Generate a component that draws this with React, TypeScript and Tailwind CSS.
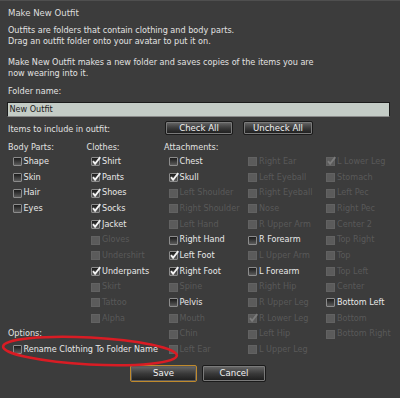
type State = "on" | "off" | "dis" | "dison";
type Item = { label: string; state: State };

const font = {
  fontFamily: "'DejaVu Sans Condensed', 'DejaVu Sans', sans-serif",
};

const bodyParts: Item[] = [
  { label: "Shape", state: "off" },
  { label: "Skin", state: "off" },
  { label: "Hair", state: "off" },
  { label: "Eyes", state: "off" },
];

const clothes: Item[] = [
  { label: "Shirt", state: "on" },
  { label: "Pants", state: "on" },
  { label: "Shoes", state: "on" },
  { label: "Socks", state: "on" },
  { label: "Jacket", state: "on" },
  { label: "Gloves", state: "dis" },
  { label: "Undershirt", state: "dis" },
  { label: "Underpants", state: "on" },
  { label: "Skirt", state: "dis" },
  { label: "Tattoo", state: "dis" },
  { label: "Alpha", state: "dis" },
];

const attach1: Item[] = [
  { label: "Chest", state: "off" },
  { label: "Skull", state: "on" },
  { label: "Left Shoulder", state: "dis" },
  { label: "Right Shoulder", state: "dis" },
  { label: "Left Hand", state: "dis" },
  { label: "Right Hand", state: "off" },
  { label: "Left Foot", state: "on" },
  { label: "Right Foot", state: "on" },
  { label: "Spine", state: "dis" },
  { label: "Pelvis", state: "off" },
  { label: "Mouth", state: "dis" },
  { label: "Chin", state: "dis" },
  { label: "Left Ear", state: "dis" },
];

const attach2: Item[] = [
  { label: "Right Ear", state: "dis" },
  { label: "Left Eyeball", state: "dis" },
  { label: "Right Eyeball", state: "dis" },
  { label: "Nose", state: "dis" },
  { label: "R Upper Arm", state: "dis" },
  { label: "R Forearm", state: "off" },
  { label: "L Upper Arm", state: "dis" },
  { label: "L Forearm", state: "off" },
  { label: "Right Hip", state: "dis" },
  { label: "R Upper Leg", state: "dis" },
  { label: "R Lower Leg", state: "dison" },
  { label: "Left Hip", state: "dis" },
  { label: "L Upper Leg", state: "dis" },
];

const attach3: Item[] = [
  { label: "L Lower Leg", state: "dison" },
  { label: "Stomach", state: "dis" },
  { label: "Left Pec", state: "dis" },
  { label: "Right Pec", state: "dis" },
  { label: "Center 2", state: "dis" },
  { label: "Top Right", state: "dis" },
  { label: "Top", state: "dis" },
  { label: "Top Left", state: "dis" },
  { label: "Center", state: "dis" },
  { label: "Bottom Left", state: "off" },
  { label: "Bottom", state: "dis" },
  { label: "Bottom Right", state: "dis" },
];

const Box = ({ state }: { state: State }) => {
  const disabled = state === "dis" || state === "dison";
  const checked = state === "on" || state === "dison";
  return (
    <span
      className={
        disabled
          ? "relative w-[9px] h-[9px] shrink-0 bg-[#5b5b5b] border border-[#626262]"
          : "relative w-[9px] h-[9px] shrink-0 rounded-[1px] border border-[#8c8c8c] bg-gradient-to-b from-[#1c1c1c] to-[#5c5c5c]"
      }
    >
      {checked && (
        <svg
          viewBox="0 0 9 9"
          className="absolute -left-[1px] -top-[2px] w-[10px] h-[10px]"
        >
          <path
            d="M1.8 4.6 L3.7 7 L8.4 1"
            fill="none"
            stroke={disabled ? "#7c7c7c" : "#f4f4f4"}
            strokeWidth="1.7"
          />
        </svg>
      )}
    </span>
  );
};

const Row = ({ item }: { item: Item }) => {
  const disabled = item.state === "dis" || item.state === "dison";
  return (
    <div className="h-[15.67px] flex items-center gap-[2px] pl-[4.5px] whitespace-nowrap">
      <Box state={item.state} />
      <span
        className={`leading-[15.67px] ${disabled ? "text-[#595959]" : "text-[#e8e8e8]"}`}
      >
        {item.label}
      </span>
    </div>
  );
};

const Button = ({
  label,
  width,
  primary,
}: {
  label: string;
  width: string;
  primary?: boolean;
}) => (
  <div
    className={`${width} flex items-center justify-center rounded-[2px] border text-[9.5px] text-[#f2f2f2] bg-gradient-to-b from-[#6a6a6a] via-[#3a3a3a] to-[#1c1c1c] ${
      primary
        ? "border-[#c08a2c] shadow-[inset_0_0_0_1px_#5a5a5a]"
        : "border-[#1a1a1a] shadow-[inset_0_0_0_1px_#7a7a7a]"
    }`}
  >
    {label}
  </div>
);

export default function App() {
  return (
    <div
      style={font}
      className="relative w-[400px] h-[398px] overflow-hidden bg-[#3c3c3c] border-t border-[#4f4f4f] px-[8px] pt-[6px] text-[9px] text-[#e2e2e2] font-stretch-condensed"
    >
      <div className="text-[9.5px] leading-[11px] text-[#dedede]">
        Make New Outfit
      </div>

      <p className="mt-[7px] leading-[11px]">
        Outfits are folders that contain clothing and body parts.
        <br />
        Drag an outfit folder onto your avatar to put it on.
      </p>
      <p className="mt-[10px] leading-[11px]">
        Make New Outfit makes a new folder and saves copies of the items you are
        <br />
        now wearing into it.
      </p>

      <div className="mt-[7px] leading-[11px]">Folder name:</div>
      <div className="mt-[5px] -ml-[1px] w-[383px] h-[15px] border border-[#1b1b1b] border-b-[#8a8a8a] bg-[#c4ccc6] pl-[1.5px] leading-[13px] text-[#1c1c1c]">
        New Outfit
      </div>

      <div className="mt-[4px] h-[14px] flex">
        <div className="w-[157px] mt-[3px] leading-[11px]">
          Items to include in outfit:
        </div>
        <Button label="Check All" width="w-[68px]" />
        <div className="w-[10px]" />
        <Button label="Uncheck All" width="w-[70px]" />
      </div>

      <div className="mt-[7px] flex">
        <div className="w-[78.5px] flex flex-col">
          <div className="h-[12px] leading-[11px]">Body Parts:</div>
          {bodyParts.map((it) => (
            <Row key={it.label} item={it} />
          ))}
          <div className="mt-auto">
            <div className="h-[15.67px] leading-[15.67px]">Options:</div>
            <Row item={{ label: "Rename Clothing To Folder Name", state: "off" }} />
          </div>
        </div>
        <div className="w-[77.5px] flex flex-col">
          <div className="h-[12px] leading-[11px]">Clothes:</div>
          {clothes.map((it) => (
            <Row key={it.label} item={it} />
          ))}
        </div>
        <div className="flex flex-col">
          <div className="h-[12px] leading-[11px]">Attachments:</div>
          <div className="flex">
            <div className="w-[79.5px]">
              {attach1.map((it) => (
                <Row key={it.label} item={it} />
              ))}
            </div>
            <div className="w-[78px]">
              {attach2.map((it) => (
                <Row key={it.label} item={it} />
              ))}
            </div>
            <div className="w-[70px]">
              {attach3.map((it) => (
                <Row key={it.label} item={it} />
              ))}
            </div>
          </div>
        </div>
      </div>

      <div className="mt-[7px] h-[17px] flex gap-[5px] pl-[122px]">
        <Button label="Save" width="w-[67px]" primary />
        <Button label="Cancel" width="w-[64px]" />
      </div>

      {/* red annotation ring */}
      <svg
        className="absolute left-0 top-[330px] w-[190px] h-[42px] pointer-events-none"
        viewBox="0 0 190 42"
      >
        <ellipse
          cx="90"
          cy="20"
          rx="87"
          ry="13.5"
          transform="rotate(3 90 20)"
          fill="none"
          stroke="#d91c24"
          strokeWidth="2.6"
        />
      </svg>
    </div>
  );
}
